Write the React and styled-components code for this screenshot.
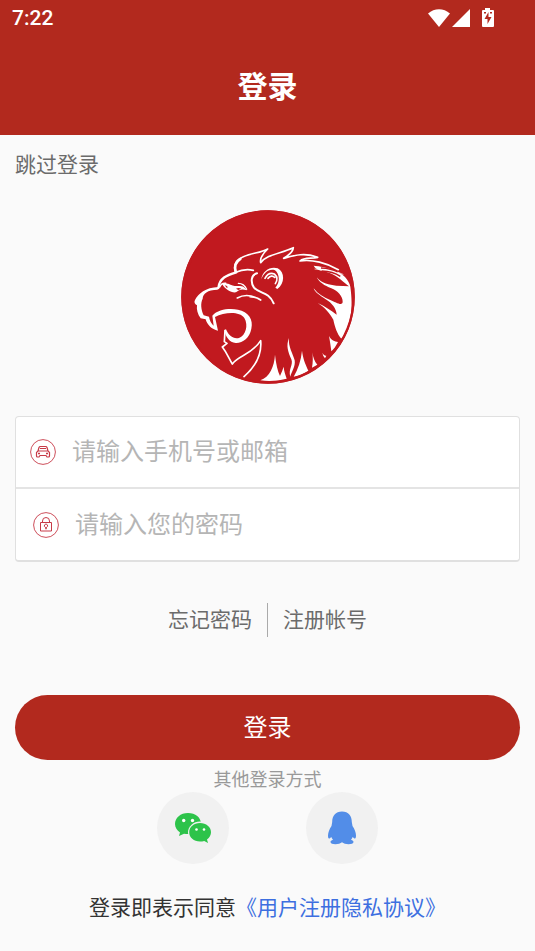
import React, { useState } from "react";
import styled, { createGlobalStyle } from "styled-components";

const GlobalStyle = createGlobalStyle`
  * {
    box-sizing: border-box;
  }
  body {
    margin: 0;
    background: #fafafa;
    font-family: Roboto, "Noto Sans CJK SC", sans-serif;
  }
`;

const Page = styled.div`
  display: flex;
  flex-direction: column;
  min-height: 100vh;
`;

const Header = styled.header`
  background: #b2291e;
  color: #fff;
`;

const StatusBar = styled.div`
  display: flex;
  align-items: center;
  justify-content: space-between;
  height: 38px;
  padding: 0 37px 2px 12px;
  font-size: 21px;
  font-weight: 500;
  line-height: 38px;
`;

const StatusIcons = styled.div`
  display: flex;
  align-items: center;

  svg {
    display: block;
  }
`;

const Title = styled.h1`
  margin: 0;
  height: 97px;
  font-size: 30px;
  line-height: 97px;
  font-weight: 700;
  text-align: center;
`;

const Content = styled.main`
  display: flex;
  flex-direction: column;
  padding: 0 15px;
`;

const TextLink = styled.a`
  color: #6b6b6b;
  font-size: 21px;
  line-height: 34px;
  text-decoration: none;
`;

const SkipRow = styled.div`
  display: flex;
  padding-top: 13px;
`;

const LogoWrap = styled.div`
  display: flex;
  justify-content: center;
  padding: 27px 0 31px;

  svg {
    display: block;
  }
`;

const Form = styled.form`
  display: flex;
  flex-direction: column;
`;

const Fields = styled.div`
  background: #fff;
  border: 1px solid #e0e0e0;
  border-bottom-width: 2px;
  border-radius: 4px;
`;

const Field = styled.label`
  display: flex;
  align-items: center;
  height: 70px;
  padding-left: ${(props) => (props.$indent ? 17 : 14)}px;

  & + & {
    height: 73px;
    border-top: 2px solid #e4e4e4;
  }

  svg {
    flex: none;
  }
`;

const Input = styled.input`
  flex: 1;
  min-width: 0;
  height: 48px;
  margin-left: 15px;
  padding: 0;
  border: 0;
  outline: 0;
  background: transparent;
  color: #333;
  font-family: inherit;
  font-size: 24px;

  &::placeholder {
    color: #b5b5b5;
    opacity: 1;
  }
`;

const Links = styled.nav`
  display: flex;
  justify-content: center;
  margin-top: 41px;
`;

const Divider = styled.span`
  width: 1px;
  height: 34px;
  margin: 0 15px;
  background: #aaa;
`;

const SubmitButton = styled.button`
  height: 65px;
  margin-top: 58px;
  padding: 0 0 4px;
  border: 0;
  border-radius: 33px;
  background: #b2291e;
  color: #fff;
  font-family: inherit;
  font-size: 24px;
`;

const OtherTitle = styled.p`
  margin: 8px 0 0;
  color: #999;
  font-size: 18px;
  line-height: 24px;
  text-align: center;
`;

const Socials = styled.div`
  display: flex;
  justify-content: center;
  gap: 77px;
`;

const SocialButton = styled.button`
  display: flex;
  align-items: center;
  justify-content: center;
  width: 72px;
  height: 72px;
  padding: 0;
  border: 0;
  border-radius: 50%;
  background: #f1f1f1;
`;

const Agreement = styled.p`
  margin: 27px 0 0;
  color: #333;
  font-size: 21px;
  line-height: 34px;
  text-align: center;

  a {
    color: #3d6fe0;
    text-decoration: none;
  }
`;

function WifiIcon() {
  return (
    <svg width="24" height="22" viewBox="0 0 24 22">
      <path d="M1 6.5C7.500 .8 16.500 .8 23 6.500L12 20Z" fill="#fff" />
    </svg>
  );
}

function SignalIcon() {
  return (
    <svg width="25" height="22" viewBox="0 0 25 22">
      <path d="M19 2V20H1Z" fill="#fff" />
    </svg>
  );
}

function BatteryIcon() {
  return (
    <svg width="22" height="22" viewBox="0 0 22 22">
      <path d="M9 1h5v2h3q1 0 1 1v15q0 1-1 1H7q-1 0-1-1V4q0-1 1-1h2Z" fill="#fff" />
      <path d="M12.500 5 8.500 12h3v5l4-7h-3ZM8 5h2v1.500H8ZM14 5h2v1.500h-2Z" fill="#b2291e" />
    </svg>
  );
}

function LionLogo() {
  return (
    <svg width="176" height="176" viewBox="30 27 528 528" role="img" aria-label="logo">
      <circle cx="294" cy="291" r="260" fill="#c1191f" />
      <g fill="#fff">
        {/* mane on the right and along the bottom */}
        <path d="M431 197C465 201 505 209 525 231C534 241 539 251 541 260C545 290 547 322 541 350C535 379 526 400 514 416C501 402 494 378 490 359C481 341 464 322 443 309C464 318 483 332 500 344C499 326 486 309 467 298C450 286 434 277 431 265C444 282 462 293 479 299C499 307 516 319 518 306C519 289 502 272 484 265C463 257 448 247 440 232C457 252 477 254 499 257L537 259C521 247 503 228 479 219C461 211 439 213 431 197Z" />
        <path d="M477 408C484 421 494 425 504 426C498 438 491 448 484 454C482 438 480 424 477 408Z" />
        <path d="M396 452C399 475 404 488 415 512C401 521 387 526 371 530C384 508 393 482 396 452Z" />
        <path d="M427 457C429 473 434 485 442 494L426 503C429 488 429 472 427 457Z" />
        <path d="M457 459Q463 469 469 467L465 475Q459 469 457 459Z" />
        <path d="M315 464C318 492 323 513 330 528Q337 513 341 500C342 514 346 524 350 536Q311 546 271 541C299 531 313 499 315 464Z" />
        <path d="M357 414C354 440 369 461 374 481C377 500 365 514 361 530C354 508 371 494 364 478C355 457 347 438 357 414Z" />
        {/* muzzle and open mouth */}
        <path d="M75 300C86 280 105 263 146 261L143 269C112 270 99 280 98 296C91 309 93 329 101 346L117 350C119 362 124 371 131 377L127 347C144 327 180 324 204 329C235 335 251 358 244 386C239 413 218 430 197 429C178 427 167 411 163 390L168 388C176 407 190 418 207 414C227 407 236 376 223 354C208 333 163 337 135 351L144 392C125 389 111 373 107 358L92 355C83 344 79 328 81 316Q70 310 75 300Z" />
        {/* eye */}
        <path d="M157 253C172 246 184 257 194 258C209 259 220 254 230 271C216 266 207 269 198 277C183 279 165 268 157 253Z" />
        {/* ear */}
        <path d="M274 238C277 213 301 198 323 205C345 216 345 251 322 267L316 263C331 248 329 222 315 211C297 205 281 219 274 238Z" />
      </g>
      <g fill="none" stroke="#fff" strokeWidth="5" strokeLinecap="round" strokeLinejoin="round">
        <path d="M250 211Q224 205 197 217Q188 191 208 177C235 158 269 161 293 147Q268 171 272 188C291 163 332 161 370 143Q369 158 341 175C364 169 402 155 443 172C423 177 403 171 390 183C427 177 471 189 505 209" />
        <path d="M197 214Q190 191 211 177" strokeWidth="8" />
        <path d="M145 264C148 235 170 225 199 217" strokeWidth="7" />
        <path d="M149 261Q155 248 167 250" />
        <path d="M261 220C243 224 241 246 252 263C269 282 296 274 311 310" strokeWidth="6" />
        <path d="M202 294C225 281 249 286 272 300C260 290 247 291 240 290" />
        <path d="M205 250Q222 250 230 268" strokeWidth="4" />
        <path d="M285 235Q296 215 313 222Q327 234 316 251M294 235Q305 223 314 232" />
        <path d="M165 392 163 425 171 430 157 441C171 459 176 474 187 492C205 466 246 464 272 422C275 453 264 493 222 530" />
        <path d="M435 207Q469 208 504 222M444 201Q489 209 519 223" strokeWidth="2" />
      </g>
      <path d="M164 256Q170 256 174 262L170 263ZM198 266Q206 262 214 266L205 270Z" fill="#c1191f" />
      <path d="M453 204Q484 205 503 216M455 213Q489 214 511 229" fill="none" stroke="#c1191f" strokeWidth="4" />
      <circle cx="294" cy="291" r="257" fill="none" stroke="#c1191f" strokeWidth="7" />
    </svg>
  );
}

function CarIcon() {
  return (
    <svg width="27" height="26" viewBox="0 0 27 26" fill="none" stroke="#c73b48">
      <circle cx="13" cy="13" r="12.400" strokeWidth=".9" />
      <path d="M8 12 9 8.500Q9.300 7.500 10.500 7.500h5q1.200 0 1.500 1L18 12l1.500 1.500V17q0 1-1 1H17l-1-1.500h-6L9 18H7.500q-1 0-1-1v-3.500ZM8.500 12h9M10 9.500h6" strokeWidth="1.200" />
      <path d="M8 14.500h2M16 14.500h2" strokeWidth="1.600" />
    </svg>
  );
}

function LockIcon() {
  return (
    <svg width="27" height="26" viewBox="0 0 27 26" fill="none" stroke="#c73b48">
      <circle cx="13" cy="13" r="12.400" strokeWidth=".9" />
      <path d="M7.500 10.500h11v8.500h-11ZM9.500 10.500V9a3.500 3.500 0 0 1 7 0v1.500" />
      <path d="M12.400 15.200a1.600 1.600 0 1 1 1.200 0l-.6 2Z" />
    </svg>
  );
}

function WechatIcon() {
  return (
    <svg width="38" height="32" viewBox="0 0 38 32">
      <path d="M14 1C6.500 1 1 5.800 1 12c0 3.500 2 6.500 5 8.500L5 24l5-2.300c1.300.3 2.600.4 4 .4 7.400 0 13-4.500 13-10.500S21.400 1 14 1Z" fill="#2dc34a" />
      <ellipse cx="26" cy="20.300" rx="12" ry="10.800" fill="#f1f1f1" />
      <path d="M26 11c-6.200 0-10.800 4-10.800 9.200S19.800 29.500 26 29.500c1.500 0 2.900-.2 4.200-.6l3.800 2-1-3.500c2.500-1.700 4-4.300 4-7.200C37 15 32.200 11 26 11Z" fill="#2dc34a" />
      <g fill="#fff">
        <circle cx="9.700" cy="8.500" r="1.700" />
        <circle cx="18.500" cy="8.500" r="1.700" />
        <circle cx="22.500" cy="17.500" r="1.300" />
        <circle cx="30" cy="17.500" r="1.300" />
      </g>
    </svg>
  );
}

function QqIcon() {
  return (
    <svg width="30" height="34" viewBox="0 0 30 34">
      <path d="M15 .5C8.500 .5 5.200 5 5.200 11L4.500 15C2.500 18 1 21.500 1 24.500c0 2 .4 3 1 3 .8 0 1.600-.8 2.300-1.600.4 1 1 2 1.700 2.800-1.600.5-2.500 1.200-2.500 2.200 0 2.900 8.500 3 11.500.4 3 2.600 11.500 2.500 11.500-.4 0-1-.9-1.700-2.500-2.200.7-.8 1.300-1.800 1.700-2.800.7.800 1.500 1.600 2.300 1.600.6 0 1-1 1-3 0-3-1.500-6.500-3.500-9.500L24.800 11C24.800 5 21.500.5 15 .5Z" fill="#528de8" />
    </svg>
  );
}

function App() {
  const [account, setAccount] = useState("");
  const [password, setPassword] = useState("");

  return (
    <>
      <GlobalStyle />
      <Page>
        <Header>
          <StatusBar>
            <span>7:22</span>
            <StatusIcons>
              <WifiIcon />
              <SignalIcon />
              <BatteryIcon />
            </StatusIcons>
          </StatusBar>
          <Title>登录</Title>
        </Header>
        <Content>
          <SkipRow>
            <TextLink href="/">跳过登录</TextLink>
          </SkipRow>
          <LogoWrap>
            <LionLogo />
          </LogoWrap>
          <Form onSubmit={(e) => e.preventDefault()}>
            <Fields>
              <Field>
                <CarIcon />
                <Input
                  type="text"
                  aria-label="手机号或邮箱"
                  placeholder="请输入手机号或邮箱"
                  value={account}
                  onChange={(e) => setAccount(e.target.value)}
                />
              </Field>
              <Field $indent>
                <LockIcon />
                <Input
                  type="password"
                  aria-label="密码"
                  placeholder="请输入您的密码"
                  value={password}
                  onChange={(e) => setPassword(e.target.value)}
                />
              </Field>
            </Fields>
            <Links>
              <TextLink href="/forgot">忘记密码</TextLink>
              <Divider />
              <TextLink href="/register">注册帐号</TextLink>
            </Links>
            <SubmitButton type="submit">登录</SubmitButton>
          </Form>
          <OtherTitle>其他登录方式</OtherTitle>
          <Socials>
            <SocialButton type="button" aria-label="微信">
              <WechatIcon />
            </SocialButton>
            <SocialButton type="button" aria-label="QQ">
              <QqIcon />
            </SocialButton>
          </Socials>
          <Agreement>
            登录即表示同意<a href="/agreement">《用户注册隐私协议》</a>
          </Agreement>
        </Content>
      </Page>
    </>
  );
}

export default App;
